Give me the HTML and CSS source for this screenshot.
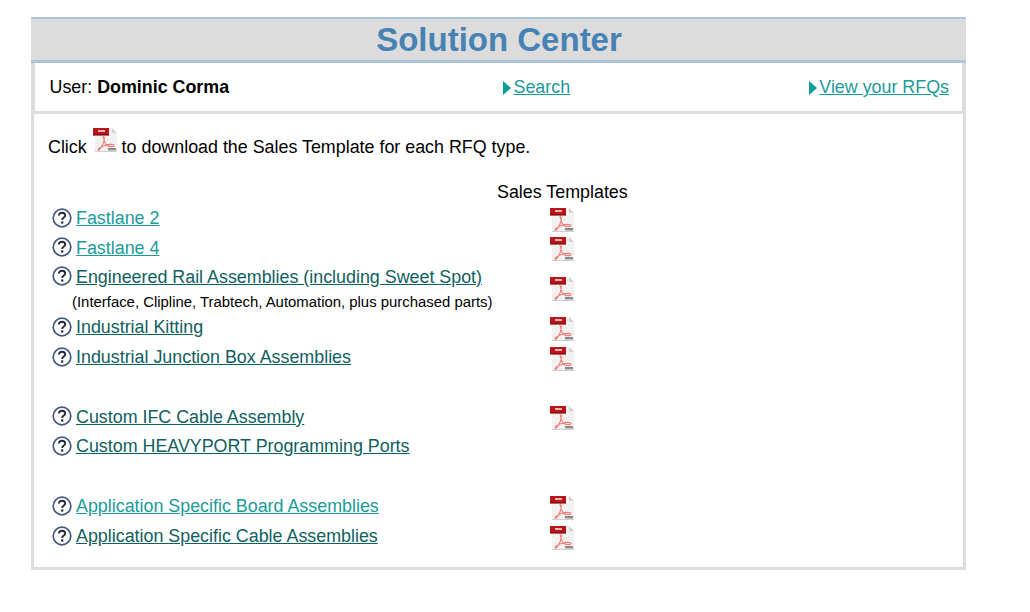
FILE: index.html
```html
<!DOCTYPE html>
<html lang="en">
<head>
<meta charset="utf-8">
<title>Solution Center</title>
<link rel="stylesheet" href="styles.css">
</head>
<body>
<svg class="defs" width="0" height="0" aria-hidden="true">
  <defs>
    <symbol id="pdf" viewBox="0 0 26 26">
      <path d="M3 1H20L25 6V25H3Z" fill="#f3f0f0"/>
      <path d="M20 1L25 6H20Z" fill="#d4d2d2"/>
      <path d="M3 25H25V24H3Z" fill="#cfcfcf"/>
      <rect x="1" y="1" width="16" height="7" fill="#b8141a"/>
      <rect x="1" y="7" width="16" height="1.6" fill="#8a0d12"/>
      <rect x="6" y="3" width="7" height="2" fill="#e8b4b4"/>
      <path d="M11 9C12 14 13 17 15 18.5C17 20 22 20 22 18.5C22 17 17 17 12.5 18.5C9 19.8 6 22 6 23C6 24 9 22 11 17C12 14 12.6 11 12 9.5" fill="none" stroke="#ef7f7d" stroke-width="1.1"/>
      <rect x="16" y="21" width="8" height="2.4" fill="#8b8b8b"/>
    </symbol>
    <symbol id="help" viewBox="0 0 20 20">
      <circle cx="10" cy="10" r="8.8" fill="#fff" stroke="#44597f" stroke-width="1.7"/>
      <path d="M6.9 7.6C6.9 5.8 8.2 4.8 10 4.8C11.9 4.8 13.2 5.9 13.2 7.4C13.2 9.6 10.2 9.6 10.2 12" fill="none" stroke="#222b3d" stroke-width="1.9"/>
      <rect x="9.1" y="13.4" width="2.2" height="2.2" fill="#222b3d"/>
    </symbol>
  </defs>
</svg>
<main class="panel">
  <h1 class="title">Solution Center</h1>
  <div class="userbar">
    <div class="user">User: <b>Dominic Corma</b></div>
    <div class="nav nav-mid"><span class="arrow"></span><a class="lnk" href="#">Search</a></div>
    <div class="nav nav-end"><span class="arrow"></span><a class="lnk" href="#">View your RFQs</a></div>
  </div>
  <section class="content">
    <p class="intro">Click <svg class="pdf pdf-inline"><use href="#pdf"/></svg> to download the Sales Template for each RFQ type.</p>
    <div class="head">Sales Templates</div>
    <div class="row">
      <div class="name"><svg class="help"><use href="#help"/></svg><a class="lnk" href="#">Fastlane 2</a></div>
      <svg class="pdf"><use href="#pdf"/></svg>
    </div>
    <div class="row">
      <div class="name"><svg class="help"><use href="#help"/></svg><a class="lnk" href="#">Fastlane 4</a></div>
      <svg class="pdf"><use href="#pdf"/></svg>
    </div>
    <div class="row row-tall">
      <div>
        <div class="name"><svg class="help"><use href="#help"/></svg><a class="lnk dark" href="#">Engineered Rail Assemblies (including Sweet Spot)</a></div>
        <div class="sub">(Interface, Clipline, Trabtech, Automation, plus purchased parts)</div>
      </div>
      <svg class="pdf"><use href="#pdf"/></svg>
    </div>
    <div class="row">
      <div class="name"><svg class="help"><use href="#help"/></svg><a class="lnk dark" href="#">Industrial Kitting</a></div>
      <svg class="pdf"><use href="#pdf"/></svg>
    </div>
    <div class="row">
      <div class="name"><svg class="help"><use href="#help"/></svg><a class="lnk dark" href="#">Industrial Junction Box Assemblies</a></div>
      <svg class="pdf"><use href="#pdf"/></svg>
    </div>
    <div class="spacer"></div>
    <div class="row">
      <div class="name"><svg class="help"><use href="#help"/></svg><a class="lnk dark" href="#">Custom IFC Cable Assembly</a></div>
      <svg class="pdf"><use href="#pdf"/></svg>
    </div>
    <div class="row">
      <div class="name"><svg class="help"><use href="#help"/></svg><a class="lnk dark" href="#">Custom HEAVYPORT Programming Ports</a></div>
    </div>
    <div class="spacer spacer-wide"></div>
    <div class="row">
      <div class="name"><svg class="help"><use href="#help"/></svg><a class="lnk" href="#">Application Specific Board Assemblies</a></div>
      <svg class="pdf"><use href="#pdf"/></svg>
    </div>
    <div class="row">
      <div class="name"><svg class="help"><use href="#help"/></svg><a class="lnk dark" href="#">Application Specific Cable Assemblies</a></div>
      <svg class="pdf"><use href="#pdf"/></svg>
    </div>
  </section>
</main>
</body>
</html>
```

FILE: styles.css
```css
* { box-sizing: border-box; }
html, body { margin: 0; background: #fff; }
body {
  padding: 17px 0 0 31px;
  font-family: "Liberation Sans", Arial, sans-serif;
  font-size: 17.87px;
  color: #000;
}
.defs { position: absolute; }
.panel { width: 935px; }
.title {
  margin: 0;
  height: 46px;
  padding-left: 1px;
  background: #dcdcdc;
  border-top: 2px solid #aec3de;
  border-bottom: 3px solid #aec3de;
  color: #4682b4;
  font-size: 33px;
  font-weight: bold;
  line-height: 41px;
  text-align: center;
}
.userbar {
  display: grid;
  grid-template-columns: 453.5px 1fr auto;
  align-items: center;
  height: 51px;
  padding: 1px 13px 0 14.5px;
  border-left: 4px solid #dcdcdc;
  border-right: 4px solid #dcdcdc;
  border-bottom: 3px solid #dcdcdc;
}
.nav { display: flex; align-items: center; }
.arrow {
  width: 0;
  height: 0;
  margin-right: 2.5px;
  border-left: 8px solid #0e9b9b;
  border-top: 7px solid transparent;
  border-bottom: 7px solid transparent;
}
.lnk { color: #1a9a9a; }
.lnk.dark { color: #0f6060; }
.content {
  height: 456px;
  padding: 13px 0 0 14px;
  border-left: 3px solid #dcdcdc;
  border-right: 3px solid #dcdcdc;
  border-bottom: 3px solid #dcdcdc;
}
.intro { margin: 0; height: 38px; line-height: 38px; white-space: nowrap; }
.pdf { display: block; width: 26px; height: 26px; margin-top: 2px; }
.pdf-inline { display: inline-block; vertical-align: 0; margin: 0 -1px 0 0; }
.head { height: 26px; margin-top: 13px; padding-left: 449px; line-height: 28px; }
.row {
  display: grid;
  grid-template-columns: 501px 26px;
  align-items: center;
  height: 29.6px;
}
.row-tall { height: 50px; }
.name { display: flex; align-items: center; gap: 4px; padding-left: 4px; }
.help { width: 20px; height: 20px; flex: none; margin-top: -2px; }
.sub { font-size: 14.9px; padding: 6px 0 0 24px; white-space: nowrap; }
.spacer { height: 30.1px; }
.spacer-wide { height: 30.5px; }
```
